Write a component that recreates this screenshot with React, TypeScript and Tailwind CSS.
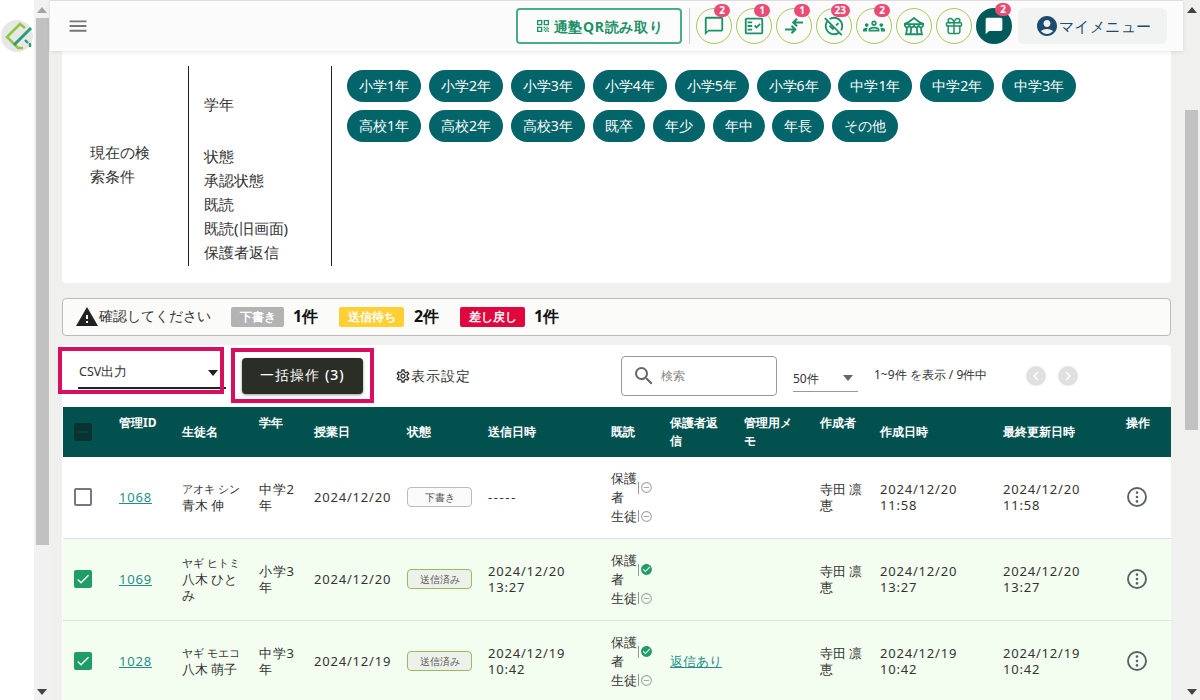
import React from "react";
import { MdOutlineChatBubbleOutline, MdOutlineFactCheck, MdOutlineUnpublished, MdOutlineGroups, MdOutlineFestival, MdChatBubble, MdAccountCircle, MdOutlineQrCode, MdWarning, MdOutlineSettings, MdOutlineDoDisturbOn, MdCheckCircle, MdChevronLeft, MdChevronRight, MdMenu, MdCheck, MdRemove, MdSearch } from "react-icons/md";
import { Gift } from "lucide-react";

const ArrowsIcon = () => (
  <svg width="20" height="20" viewBox="0 0 20 20" fill="none" stroke="#1f9168" strokeWidth="2.1">
    <path d="M1 13.5h10M7.5 9.8l3.7 3.7-3.7 3.7" />
    <path d="M19 6.5H9.5M13 2.8 9.3 6.5l3.7 3.7" />
  </svg>
);

const Tri = ({ up = false, cls = "" }: { up?: boolean; cls?: string }) => (
  <svg width="10" height="6" viewBox="0 0 10 6" className={cls}>
    <path d={up ? "M5 0l5 6H0z" : "M0 0h10L5 6z"} fill="currentColor" />
  </svg>
);

const Round = ({ n, dark, children }: { n?: number; dark?: boolean; children: React.ReactNode }) => (
  <div className={`relative w-[36px] h-[36px] rounded-full flex items-center justify-center ${dark ? "bg-[#02595a]" : "border border-[#a5c95a] bg-[#fbfcfa]"}`}>
    {children}
    {n !== undefined && (
      <span className="absolute -top-[5px] right-[1px] min-w-[16px] h-[13px] px-[4px] rounded-full bg-[#ea4c76] text-white text-[10px] leading-[13px] font-bold text-center">{n}</span>
    )}
  </div>
);

const Chip = ({ t }: { t: string }) => (
  <span className="h-[32px] px-[12px] rounded-full bg-[#03646a] text-white text-[14px] leading-[31px] whitespace-nowrap">{t}</span>
);

const chips = ["小学1年", "小学2年", "小学3年", "小学4年", "小学5年", "小学6年", "中学1年", "中学2年", "中学3年", "高校1年", "高校2年", "高校3年", "既卒", "年少", "年中", "年長", "その他"];

const Off = () => <MdOutlineDoDisturbOn size={13} className="text-[#aaa] shrink-0" />;
const Sep = () => <span className="w-px h-[12px] bg-[#999] shrink-0 ml-px mr-px" />;

const Read = ({ on }: { on?: boolean }) => (
  <div className="leading-[19px]">
    <div className="flex items-center">
      <span className="w-[26px] shrink-0">保護者</span>
      <Sep />
      {on ? <MdCheckCircle size={13} className="text-[#1f9d68] shrink-0" /> : <Off />}
    </div>
    <div className="flex items-center">
      <span className="w-[26px] shrink-0">生徒</span>
      <Sep />
      <Off />
    </div>
  </div>
);

const Box = ({ on }: { on?: boolean }) =>
  on ? (
    <span className="w-[18px] h-[18px] rounded-[2px] bg-[#1f9d68] flex items-center justify-center"><MdCheck size={16} className="text-white" /></span>
  ) : (
    <span className="block w-[18px] h-[18px] rounded-[2px] border-2 border-[#7d7481] bg-white" />
  );

const More = () => (
  <svg width="20" height="20" viewBox="0 0 20 20">
    <circle cx="10" cy="10" r="9" fill="none" stroke="#5e6268" strokeWidth="1.9" />
    <circle cx="10" cy="5.6" r="1.3" fill="#5e6268" />
    <circle cx="10" cy="10" r="1.3" fill="#5e6268" />
    <circle cx="10" cy="14.4" r="1.3" fill="#5e6268" />
  </svg>
);

const rows = [
  { id: "1068", kana: "アオキ シン", name: "青木 伸", grade: "中学2年", date: "2024/12/20", status: "下書き", sent: null, on: false, reply: false, c: ["2024/12/20", "11:58"] },
  { id: "1069", kana: "ヤギ ヒトミ", name: "八木 ひとみ", grade: "小学3年", date: "2024/12/20", status: "送信済み", sent: ["2024/12/20", "13:27"], on: true, reply: false, c: ["2024/12/20", "13:27"] },
  { id: "1028", kana: "ヤギ モエコ", name: "八木 萌子", grade: "中学3年", date: "2024/12/19", status: "送信済み", sent: ["2024/12/19", "10:42"], on: true, reply: true, c: ["2024/12/19", "10:42"] },
];

const thTop = "pl-[10px] pr-[10px] pt-[7px] align-top text-left font-bold";
const thMid = "pl-[10px] pr-[10px] align-middle text-left font-bold";
const td = "pl-[10px] align-middle";
const num = "tracking-[0.8px]";

export default function App() {
  return (
    <div className="w-[1200px] h-[700px] flex overflow-hidden bg-[#f0f1ef] text-[#333] font-['Roboto','Noto_Sans_CJK_JP',sans-serif]">
      <div className="w-[34px] shrink-0 bg-white pt-[20px] pl-px">
        <svg width="32" height="32" viewBox="0 0 32 32">
          <circle cx="16" cy="16" r="16" fill="#e6e7e6" />
          <path d="M24 8l-5-4L6 17l11 11h5" fill="none" stroke="#93c63f" strokeWidth="2.6" />
          <path d="M30 8 13 25" fill="none" stroke="#2a9d78" strokeWidth="3" />
          <path d="M24 20l3 3M29 23v4" fill="none" stroke="#2a9d78" strokeWidth="2.4" />
        </svg>
      </div>
      <div className="w-[16px] shrink-0 bg-[#f1f1f1] flex flex-col items-center text-[#a3a3a3]">
        <Tri up cls="mt-[7px] mb-[5px]" />
        <div className="w-[13px] h-[527px] bg-[#c1c1c1]" />
        <Tri cls="mt-auto mb-[5px] text-[#444]" />
      </div>

      <div className="flex-1 min-w-0 flex flex-col">
        <header className="relative z-10 h-[51px] shrink-0 bg-[#fafbfa] border-t border-[#ddd] shadow-[0_1px_4px_rgba(0,0,0,0.1)] flex items-center pl-[19px] pr-[16px]">
          <MdMenu size={18} className="text-[#777] scale-125" />
          <div className="ml-auto flex items-center">
            <button className="w-[166px] h-[36px] rounded-[4px] border-2 border-[#4aad8a] bg-[#fbfcfb] flex items-center justify-center gap-[3px] text-[#1f9168] text-[14px] font-bold tracking-[0.7px]">
              <MdOutlineQrCode size={16} />通塾QR読み取り
            </button>
            <span className="w-px h-[36px] bg-[#ccc] ml-[7px] mr-[6px]" />
            <div className="flex items-center gap-[4px]">
              <Round n={2}><MdOutlineChatBubbleOutline size={22} className="text-[#1f9168]" /></Round>
              <Round n={1}><MdOutlineFactCheck size={22} className="text-[#1f9168]" /></Round>
              <Round n={1}><ArrowsIcon /></Round>
              <Round n={23}><MdOutlineUnpublished size={22} className="text-[#1f9168]" /></Round>
              <Round n={2}><MdOutlineGroups size={22} className="text-[#1f9168]" /></Round>
              <Round><MdOutlineFestival size={22} className="text-[#1f9168]" /></Round>
              <Round><Gift size={20} strokeWidth={1.8} className="text-[#1f9168]" /></Round>
              <Round n={2} dark><MdChatBubble size={20} className="text-white" /></Round>
            </div>
            <div className="ml-[6px] w-[149px] h-[36px] rounded-[6px] bg-[#f0f3f1] flex items-center pl-[17px] text-[#1e4a6d] text-[15px] tracking-[0.4px]">
              <MdAccountCircle size={24} />マイメニュー
            </div>
          </div>
        </header>

        <main className="flex-1 min-h-0 overflow-hidden px-[12px]">
          <section className="h-[232px] bg-white rounded-b-[4px] flex pt-[15px] text-[15px] leading-[24px]">
            <div className="w-[126px] h-[196px] flex items-center pl-[28px] pr-[28px]">現在の検索条件</div>
            <div className="w-[143px] h-[200px] border-l border-[#222] pl-[15px]">
              <div className="h-[76px] flex items-center">学年</div>
              <div className="mt-[2px]">状態</div>
              <div>承認状態</div>
              <div>既読</div>
              <div>既読(旧画面)</div>
              <div>保護者返信</div>
            </div>
            <div className="h-[200px] border-l border-[#222] pl-[15px] pt-[4px] flex-1">
              <div className="flex flex-wrap gap-x-[7.9px] gap-y-[8px] w-[740px]">
                {chips.map((c) => <Chip key={c} t={c} />)}
              </div>
            </div>
          </section>

          <div className="mt-[15px] h-[38px] rounded-[4px] border border-[#bbb] bg-[#fbfbfa] flex items-center pl-[12px] text-[13.8px]">
            <MdWarning size={24} className="text-[#222]" />
            <span className="w-[132px] -mt-[1px]">確認してください</span>
            <span className="w-[53px] h-[20px] rounded-[2px] bg-[#b3b3b3] text-white text-[12px] font-bold leading-[20px] text-center">下書き</span>
            <b className="w-[55px] pl-[9px] text-[16px] -mt-[2px] text-[#111]">1件</b>
            <span className="w-[65px] h-[20px] rounded-[2px] bg-[#ffcf33] text-white text-[12px] font-bold leading-[20px] text-center">送信待ち</span>
            <b className="w-[56px] pl-[10px] text-[16px] -mt-[2px] text-[#111]">2件</b>
            <span className="w-[65px] h-[20px] rounded-[2px] bg-[#e0073f] text-white text-[12px] font-bold leading-[20px] text-center">差し戻し</span>
            <b className="pl-[9px] text-[16px] -mt-[2px] text-[#111]">1件</b>
          </div>

          <section className="relative mt-[9px] bg-white rounded-t-[4px]">
            <div className="h-[62px] flex text-[12px]">
              <div className="relative w-[148px] ml-[16px] h-[44px] border-b-2 border-[#222] pt-[13px] pl-px flex items-center text-[12.5px]">
                <span>CSV出力</span>
                <Tri cls="absolute right-[8px] top-[25px] text-[#222]" />
              </div>
              <button className="ml-[16px] mt-[13px] w-[121px] h-[36px] pb-[3px] rounded-[4px] bg-[#2b2e27] shadow-[0_1px_3px_rgba(0,0,0,0.4)] text-white text-[14px] font-medium tracking-[1px]">一括操作 (3)</button>
              <div className="ml-[32px] mt-[12px] h-[37px] w-[77px] flex items-center text-[14px] tracking-[1.1px]">
                <MdOutlineSettings size={16} className="shrink-0" />表示設定
              </div>
              <div className="ml-[149px] mt-[11px] w-[156px] h-[40px] rounded-[4px] border border-[#999] flex items-center pl-[10px] text-[#888]">
                <MdSearch size={24} className="text-[#666]" />
                <span className="ml-[5px]">検索</span>
              </div>
              <div className="relative ml-[16px] mt-[13px] w-[65px] h-[34px] border-b border-[#999] flex items-end pb-[3px]">
                <span>50件</span>
                <Tri cls="absolute right-[5px] top-[17px] text-[#666]" />
              </div>
              <div className="ml-[16px] mt-[21px] h-[18px] leading-[18px] w-[152px]">1~9件 を表示 / 9件中</div>
              <div className="mt-[21px] flex gap-[12px] h-[20px]">
                <span className="w-[20px] h-[20px] rounded-full bg-[#e0e0e0] flex items-center justify-center"><MdChevronLeft size={18} className="text-white" /></span>
                <span className="w-[20px] h-[20px] rounded-full bg-[#e0e0e0] flex items-center justify-center"><MdChevronRight size={18} className="text-white" /></span>
              </div>
            </div>

            <table className="table-fixed w-[1108px] ml-px border-collapse text-[13px] leading-[16px]">
              <colgroup>
                <col className="w-[46px]" /><col className="w-[63px]" /><col className="w-[77px]" /><col className="w-[55px]" /><col className="w-[93px]" /><col className="w-[81px]" /><col className="w-[123px]" /><col className="w-[59px]" /><col className="w-[74px]" /><col className="w-[76px]" /><col className="w-[60px]" /><col className="w-[123px]" /><col className="w-[123px]" /><col className="w-[55px]" />
              </colgroup>
              <thead>
                <tr className="h-[50px] bg-[#02514f] text-white text-[12px] leading-[18px]">
                  <th className="pl-[11px] align-middle">
                    <span className="w-[18px] h-[18px] rounded-[2px] bg-[#0a3230] flex items-center justify-center"><MdRemove size={16} className="text-[#02514f]" /></span>
                  </th>
                  <th className={thTop}>管理ID</th>
                  <th className={thMid}>生徒名</th>
                  <th className={thTop}>学年</th>
                  <th className={thMid}>授業日</th>
                  <th className={thMid}>状態</th>
                  <th className={thMid}>送信日時</th>
                  <th className={thMid}>既読</th>
                  <th className={thTop}>保護者返信</th>
                  <th className={thTop}>管理用メモ</th>
                  <th className={thTop}>作成者</th>
                  <th className={thMid}>作成日時</th>
                  <th className={thMid}>最終更新日時</th>
                  <th className={thTop}>操作</th>
                </tr>
              </thead>
              <tbody>
                {rows.map((r, i) => (
                  <tr key={r.id} className={`border-b border-[#e0e0e0] ${i === 0 ? "h-[81px]" : "h-[82px]"} ${r.on ? "bg-[#f3fef0]" : "bg-white"}`}>
                    <td className="pl-[11px] align-middle"><Box on={r.on} /></td>
                    <td className={td}><a className={`text-[#1f8f8a] underline ${num}`}>{r.id}</a></td>
                    <td className={`${td} pr-[6px]`}><div className="text-[11px] whitespace-nowrap">{r.kana}</div><div>{r.name}</div></td>
                    <td className={`${td} ${num}`}>{r.grade}</td>
                    <td className={`${td} whitespace-nowrap ${num}`}>{r.date}</td>
                    <td className={td}>
                      <span className={`block w-[65px] h-[20px] rounded-[4px] border text-[10px] leading-[18px] text-center text-[#555] ${r.on ? "border-[#93bf5a] bg-[#eef1ea]" : "border-[#bbb] bg-[#fafafa]"}`}>{r.status}</span>
                    </td>
                    <td className={td}>{r.sent ? <span className={num}>{r.sent[0]}<br />{r.sent[1]}</span> : <span className="tracking-[1.6px]">-----</span>}</td>
                    <td className={td}><Read on={r.on} /></td>
                    <td className={td}>{r.reply && <a className="text-[#1f8f8a] underline">返信あり</a>}</td>
                    <td className={td}></td>
                    <td className={td}>寺田 凛恵</td>
                    <td className={`${td} ${num}`}>{r.c[0]}<br />{r.c[1]}</td>
                    <td className={`${td} ${num}`}>{r.c[0]}<br />{r.c[1]}</td>
                    <td className="pl-[11px] align-middle"><More /></td>
                  </tr>
                ))}
              </tbody>
            </table>

            <div className="absolute -left-[4px] top-[2px] w-[166px] h-[47px] border-[4px] border-[#d80f5f]" />
            <div className="absolute left-[169px] top-[3px] w-[143px] h-[55px] border-[4px] border-[#d80f5f]" />
          </section>
        </main>
      </div>

      <div className="w-[17px] shrink-0 bg-[#f0f1ef] flex flex-col items-center text-[#444]">
        <Tri up cls="mt-[7px]" />
        <div className="w-[13px] h-[320px] mt-[97px] bg-[#c1c1c1]" />
        <Tri cls="mt-auto mb-[5px]" />
      </div>
    </div>
  );
}
